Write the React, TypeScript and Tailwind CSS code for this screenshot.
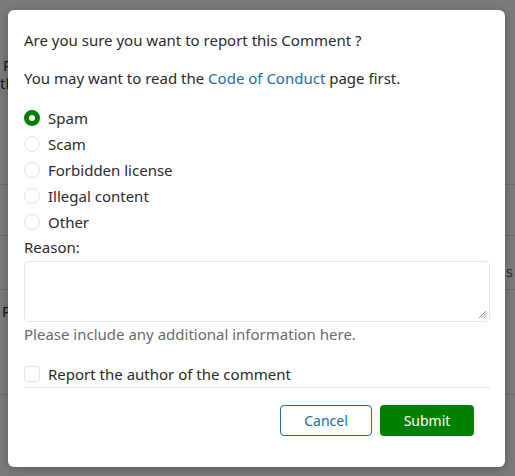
import React from "react";

const font = { fontFamily: '"Noto Sans", "Open Sans", sans-serif' };

function Radio({ checked, label }: { checked?: boolean; label: string }) {
  return (
    <div className="flex h-[26px] items-center">
      <span
        className={
          checked
            ? "h-4 w-4 shrink-0 rounded-full border-[5px] border-[#008000] bg-white"
            : "h-4 w-4 shrink-0 rounded-full border border-[#e3e3e3] bg-white"
        }
      />
      <span className="ml-2 text-[#2b2b2b]">{label}</span>
    </div>
  );
}

export default function App() {
  return (
    <div className="relative h-[476px] w-[515px] overflow-hidden bg-white text-[15px] leading-[22px]" style={font}>
      {/* background page */}
      <div className="flex flex-col">
        <div className="h-[185px] border-b border-[#dddddd] pl-[3px] pt-[56px] leading-[18px] text-[#333]">
          <div>P</div>
          <div className="-ml-[3px]">th</div>
        </div>
        <div className="h-[51px] border-b border-[#dddddd]" />
        <div className="flex h-[54px] justify-end border-b border-[#dddddd] pr-[2px] pt-[24px] text-[#1f6fa3]">
          <span>s</span>
        </div>
        <div className="h-[105px] border-b border-[#dddddd] pl-[2px] pt-[10px] text-[#333]">P</div>
      </div>

      {/* overlay */}
      <div className="absolute inset-0 bg-black/[0.52]">
        <div className="absolute left-[8px] top-[10px] flex h-[457px] w-[497px] flex-col rounded-[6px] bg-white pl-4 pr-[15px] pt-[19px] shadow-[0_2px_8px_rgba(0,0,0,0.25)]">
          <div className="text-[#2b2b2b]">Are you sure you want to report this Comment ?</div>
          <div className="mt-4 text-[#2b2b2b]">
            You may want to read the <span className="text-[#1a6ea5]">Code of Conduct</span> page first.
          </div>
          <div className="mt-4 flex flex-col">
            <Radio checked label="Spam" />
            <Radio label="Scam" />
            <Radio label="Forbidden license" />
            <Radio label="Illegal content" />
            <Radio label="Other" />
          </div>
          <div className="mt-[1px] text-[#2b2b2b]">Reason:</div>
          <div className="relative mt-[3px] h-[61px] rounded-[5px] border border-[#e6e6e6]">
            <svg className="absolute bottom-[2px] right-[2px]" width="9" height="9" viewBox="0 0 9 9">
              <path d="M8 1 L1 8 M8 3.5 L3.5 8 M8 6 L6 8" stroke="#999" strokeWidth="1" />
            </svg>
          </div>
          <div className="mt-[1px] text-[#6b6b6b]">Please include any additional information here.</div>
          <div className="mt-[18px] flex h-[22px] items-center">
            <span className="h-4 w-4 shrink-0 rounded-[3px] border border-[#e3e3e3] bg-white" />
            <span className="ml-2 text-[#2b2b2b]">Report the author of the comment</span>
          </div>
          <div className="mt-[2px] h-px bg-[#e6e6e6]" />
          <div className="mt-[17px] flex justify-end gap-2 pr-4">
            <button className="h-[31px] w-[92px] rounded-[4px] border border-[#1a6ea5] bg-white text-[14px] text-[#1a6ea5]">
              Cancel
            </button>
            <button className="h-[31px] w-[94px] rounded-[4px] bg-[#008000] text-[14px] text-white">Submit</button>
          </div>
        </div>
      </div>
    </div>
  );
}
